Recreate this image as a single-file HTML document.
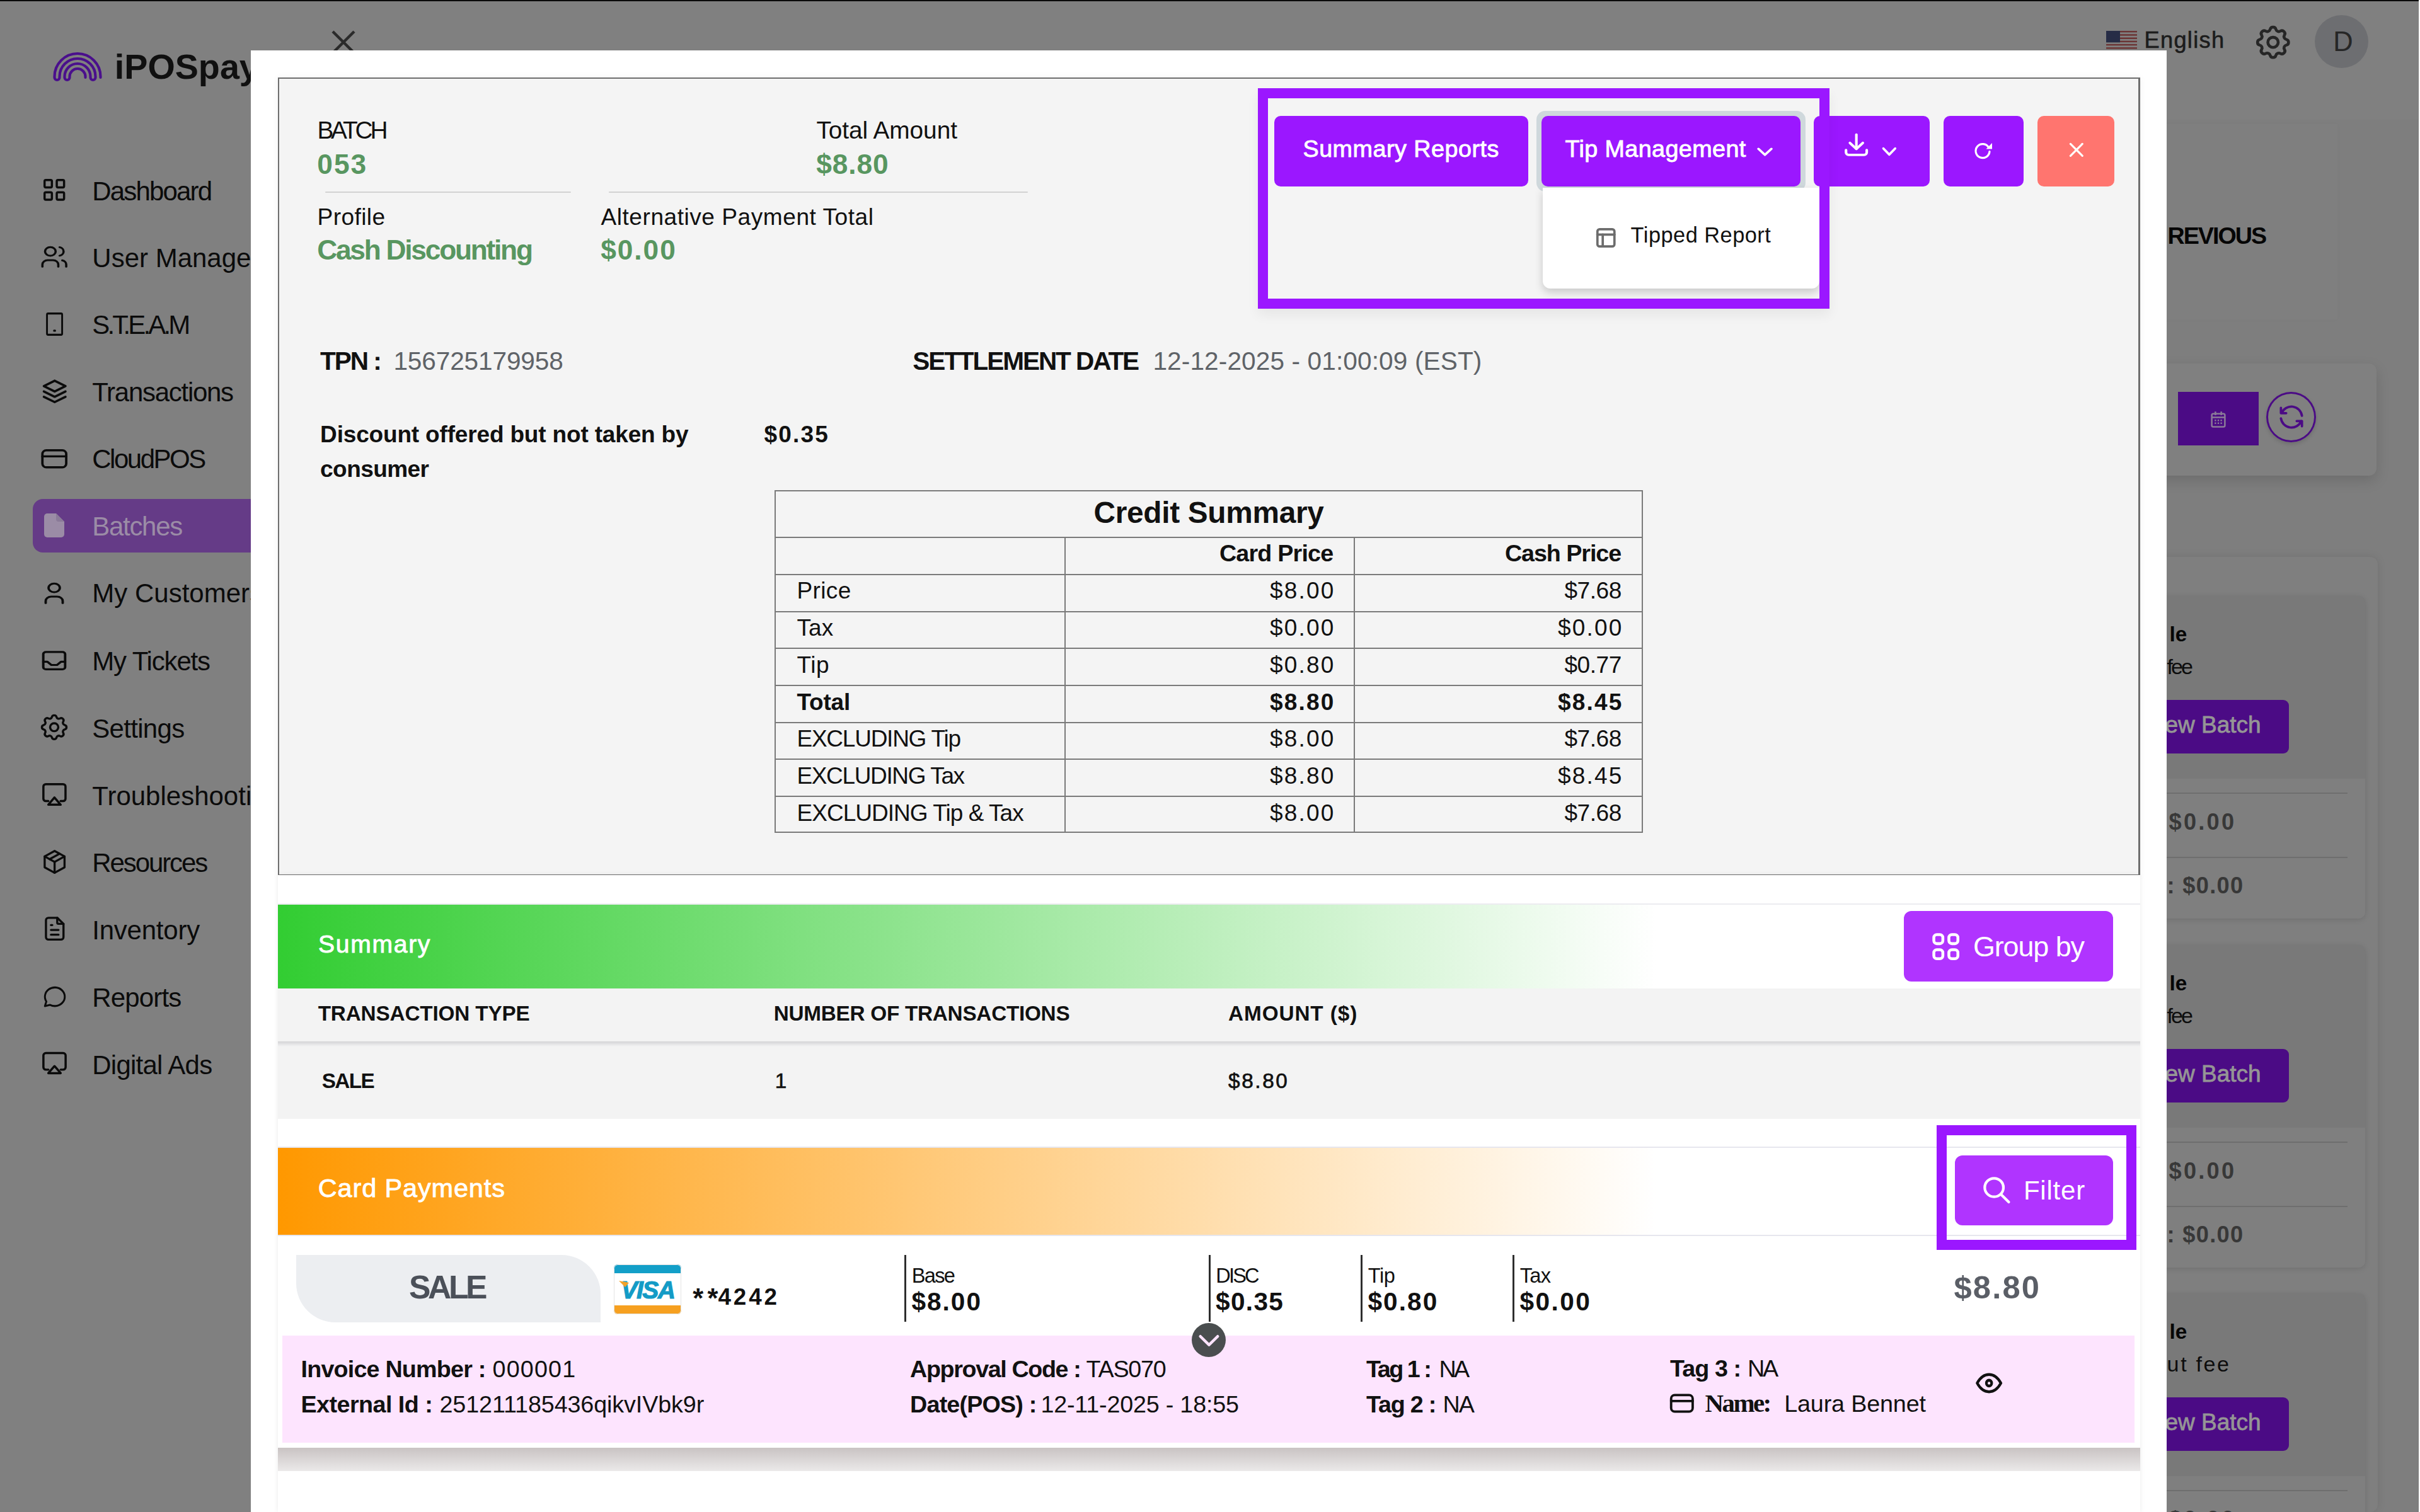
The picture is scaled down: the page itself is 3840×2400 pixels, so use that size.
<!DOCTYPE html><html><head><meta charset="utf-8"><style>html,body{margin:0;padding:0;width:3840px;height:2400px;overflow:hidden;}body{position:relative;font-family:"Liberation Sans",sans-serif;}</style></head><body><div style="position:absolute;left:0px;top:0px;width:3840px;height:2400px;background:#808080"></div><div style="position:absolute;left:398px;top:190px;width:3440px;height:2210px;background:#7e7e7e"></div><div style="position:absolute;left:0px;top:0px;width:3840px;height:2px;background:#0a0a0a"></div><div style="position:absolute;left:3838px;top:0px;width:2px;height:2400px;background:#ffffff"></div><svg style="position:absolute;left:0px;top:0px" width="200" height="140" viewBox="0 0 200 140" fill="none" stroke="#4a0f8c" stroke-width="4.2" stroke-linecap="round"><path d="M159.5 123 L159.5 121.5 A36.5 36.5 0 0 0 86.5 121.5 L86.5 123 A4 4 0 0 0 94.5 123 L94.5 121.5 A28.5 28.5 0 0 1 151.5 121.5 L151.5 123 A4 4 0 0 1 143.5 123 L143.5 121.5 A20.5 20.5 0 0 0 102.5 121.5 L102.5 123 A4 4 0 0 0 110.5 123 L110.5 121.5 A12.5 12.5 0 0 1 135.5 121.5 L135.5 123"/></svg><div style="position:absolute;top:78.9px;font-size:55.7px;line-height:55.7px;font-family:'Liberation Sans';font-weight:700;color:#101010;white-space:pre;left:181.8px;">iPOSpays</div><div style="position:absolute;left:52px;top:792px;width:368px;height:85px;background:#653b87;border-radius:16px"></div><svg style="position:absolute;left:63.0px;top:278.2px;" width="46.4" height="46.7" viewBox="0 0 24 24" preserveAspectRatio="none" fill="none" stroke="#0b0b0b" stroke-width="1.8" stroke-linecap="round" stroke-linejoin="round"><rect x="4" y="4" width="6" height="6" rx="1"/><rect x="14" y="4" width="6" height="6" rx="1"/><rect x="4" y="14" width="6" height="6" rx="1"/><rect x="14" y="14" width="6" height="6" rx="1"/></svg><svg style="position:absolute;left:60.8px;top:387.2px;" width="50.4" height="41.6" viewBox="0 0 24 24" preserveAspectRatio="none" fill="none" stroke="#0b0b0b" stroke-width="1.7" stroke-linecap="round" stroke-linejoin="round"><path d="M5 7a4 4 0 1 0 8 0a4 4 0 1 0 -8 0"/><path d="M3 21v-2a4 4 0 0 1 4 -4h4a4 4 0 0 1 4 4v2"/><path d="M16 3.13a4 4 0 0 1 0 7.75"/><path d="M21 21v-2a4 4 0 0 0 -3 -3.85"/></svg><svg style="position:absolute;left:65.6px;top:492.2px;" width="41.2" height="45.1" viewBox="0 0 24 24" preserveAspectRatio="none" fill="none" stroke="#0b0b0b" stroke-width="1.7" stroke-linecap="round" stroke-linejoin="round"><path d="M5 4a1 1 0 0 1 1 -1h12a1 1 0 0 1 1 1v16a1 1 0 0 1 -1 1h-12a1 1 0 0 1 -1 -1v-16z"/><path d="M11.5 17.5h1"/></svg><svg style="position:absolute;left:60.6px;top:595.7px;" width="51.5" height="50.7" viewBox="0 0 24 24" preserveAspectRatio="none" fill="none" stroke="#0b0b0b" stroke-width="1.7" stroke-linecap="round" stroke-linejoin="round"><path d="M12 4l-8 4l8 4l8 -4l-8 -4"/><path d="M4 12l8 4l8 -4"/><path d="M4 16l8 4l8 -4"/></svg><svg style="position:absolute;left:60.8px;top:704.8px;" width="50.4" height="46.5" viewBox="0 0 24 24" preserveAspectRatio="none" fill="none" stroke="#0b0b0b" stroke-width="1.8" stroke-linecap="round" stroke-linejoin="round"><path d="M3 8a3 3 0 0 1 3 -3h12a3 3 0 0 1 3 3v8a3 3 0 0 1 -3 3h-12a3 3 0 0 1 -3 -3z"/><path d="M3 10l18 0"/></svg><svg style="position:absolute;left:70px;top:815px" width="32" height="38" viewBox="0 0 32 38"><path d="M5 0h14l13 13v20a5 5 0 0 1 -5 5h-22a5 5 0 0 1 -5 -5v-28a5 5 0 0 1 5 -5z" fill="#9b8ca6"/><path d="M19 0v9a4 4 0 0 0 4 4h9" fill="#8a7a98"/></svg><svg style="position:absolute;left:59.2px;top:920.5px;" width="54.0" height="41.6" viewBox="0 0 24 24" preserveAspectRatio="none" fill="none" stroke="#0b0b0b" stroke-width="1.7" stroke-linecap="round" stroke-linejoin="round"><path d="M8 7a4 4 0 1 0 8 0a4 4 0 0 0 -8 0"/><path d="M6 21v-2a4 4 0 0 1 4 -4h4a4 4 0 0 1 4 4v2"/></svg><svg style="position:absolute;left:60.0px;top:1027.8px;" width="52.0" height="41.3" viewBox="0 0 24 24" preserveAspectRatio="none" fill="none" stroke="#0b0b0b" stroke-width="1.8" stroke-linecap="round" stroke-linejoin="round"><path d="M4 6a2 2 0 0 1 2 -2h12a2 2 0 0 1 2 2v12a2 2 0 0 1 -2 2h-12a2 2 0 0 1 -2 -2z"/><path d="M4 13h3l3 3h4l3 -3h3"/></svg><svg style="position:absolute;left:60.0px;top:1129.1px;" width="52.0" height="50.7" viewBox="0 0 24 24" preserveAspectRatio="none" fill="none" stroke="#0b0b0b" stroke-width="1.6" stroke-linecap="round" stroke-linejoin="round"><path d="M10.325 4.317c.426 -1.756 2.924 -1.756 3.35 0a1.724 1.724 0 0 0 2.573 1.066c1.543 -.94 3.31 .826 2.37 2.37a1.724 1.724 0 0 0 1.065 2.572c1.756 .426 1.756 2.924 0 3.35a1.724 1.724 0 0 0 -1.066 2.573c.94 1.543 -.826 3.31 -2.37 2.37a1.724 1.724 0 0 0 -2.572 1.065c-.426 1.756 -2.924 1.756 -3.35 0a1.724 1.724 0 0 0 -2.573 -1.066c-1.543 .94 -3.31 -.826 -2.37 -2.37a1.724 1.724 0 0 0 -1.065 -2.572c-1.756 -.426 -1.756 -2.924 0 -3.35a1.724 1.724 0 0 0 1.066 -2.573c-.94 -1.543 .826 -3.31 2.37 -2.37c1 .608 2.296 .07 2.572 -1.065z"/><path d="M9 12a3 3 0 1 0 6 0a3 3 0 0 0 -6 0"/></svg><svg style="position:absolute;left:62.6px;top:1237.2px;" width="46.8" height="46.1" viewBox="0 0 24 24" preserveAspectRatio="none" fill="none" stroke="#0b0b0b" stroke-width="1.8" stroke-linecap="round" stroke-linejoin="round"><path d="M7 18h-2a2 2 0 0 1 -2 -2v-10a2 2 0 0 1 2 -2h14a2 2 0 0 1 2 2v10a2 2 0 0 1 -2 2h-2"/><path d="M12 15l5 6h-10z"/></svg><svg style="position:absolute;left:62.6px;top:1344.7px;" width="47.3" height="46.2" viewBox="0 0 24 24" preserveAspectRatio="none" fill="none" stroke="#0b0b0b" stroke-width="1.7" stroke-linecap="round" stroke-linejoin="round"><path d="M12 3l8 4.5l0 9l-8 4.5l-8 -4.5l0 -9l8 -4.5"/><path d="M12 12l8 -4.5"/><path d="M12 12l0 9"/><path d="M12 12l-8 -4.5"/><path d="M16 5.25l-8 4.5"/></svg><svg style="position:absolute;left:62.6px;top:1451.2px;" width="47.7" height="46.2" viewBox="0 0 24 24" preserveAspectRatio="none" fill="none" stroke="#0b0b0b" stroke-width="1.7" stroke-linecap="round" stroke-linejoin="round"><path d="M14 3v4a1 1 0 0 0 1 1h4"/><path d="M17 21h-10a2 2 0 0 1 -2 -2v-14a2 2 0 0 1 2 -2h7l5 5v11a2 2 0 0 1 -2 2z"/><path d="M9 9l1 0"/><path d="M9 13l6 0"/><path d="M9 17l6 0"/></svg><svg style="position:absolute;left:65.5px;top:1559.8px;" width="42.0" height="44.3" viewBox="0 0 24 24" preserveAspectRatio="none" fill="none" stroke="#0b0b0b" stroke-width="1.7" stroke-linecap="round" stroke-linejoin="round"><path d="M3 20l1.3 -3.9c-2.324 -3.437 -1.426 -7.872 2.1 -10.374c3.526 -2.501 8.59 -2.296 11.845 .48c3.255 2.777 3.695 7.266 1.029 10.501c-2.666 3.235 -7.615 4.215 -11.574 2.293l-4.7 1"/></svg><svg style="position:absolute;left:62.5px;top:1664.4px;" width="47.0" height="45.1" viewBox="0 0 24 24" preserveAspectRatio="none" fill="none" stroke="#0b0b0b" stroke-width="1.8" stroke-linecap="round" stroke-linejoin="round"><path d="M7 18h-2a2 2 0 0 1 -2 -2v-10a2 2 0 0 1 2 -2h14a2 2 0 0 1 2 2v10a2 2 0 0 1 -2 2h-2"/><path d="M12 15l5 6h-10z"/></svg><div style="position:absolute;top:283.4px;font-size:42.0px;line-height:42.0px;font-family:'Liberation Sans';font-weight:400;color:#0b0b0b;white-space:pre;letter-spacing:-1.83px;left:146.3px;">Dashboard</div><div style="position:absolute;top:389.4px;font-size:42.0px;line-height:42.0px;font-family:'Liberation Sans';font-weight:400;color:#0b0b0b;white-space:pre;left:146.3px;">User Management</div><div style="position:absolute;top:495.4px;font-size:42.0px;line-height:42.0px;font-family:'Liberation Sans';font-weight:400;color:#0b0b0b;white-space:pre;letter-spacing:-3.85px;left:146.3px;">S.T.E.A.M</div><div style="position:absolute;top:602.4px;font-size:42.0px;line-height:42.0px;font-family:'Liberation Sans';font-weight:400;color:#0b0b0b;white-space:pre;letter-spacing:-1.28px;left:146.3px;">Transactions</div><div style="position:absolute;top:708.4px;font-size:42.0px;line-height:42.0px;font-family:'Liberation Sans';font-weight:400;color:#0b0b0b;white-space:pre;letter-spacing:-2.51px;left:146.3px;">CloudPOS</div><div style="position:absolute;top:815.4px;font-size:42.0px;line-height:42.0px;font-family:'Liberation Sans';font-weight:400;color:#9b8ca6;white-space:pre;letter-spacing:-1.31px;left:146.3px;">Batches</div><div style="position:absolute;top:921.4px;font-size:42.0px;line-height:42.0px;font-family:'Liberation Sans';font-weight:400;color:#0b0b0b;white-space:pre;left:146.3px;">My Customers</div><div style="position:absolute;top:1029.4px;font-size:42.0px;line-height:42.0px;font-family:'Liberation Sans';font-weight:400;color:#0b0b0b;white-space:pre;letter-spacing:-1.17px;left:146.3px;">My Tickets</div><div style="position:absolute;top:1136.4px;font-size:42.0px;line-height:42.0px;font-family:'Liberation Sans';font-weight:400;color:#0b0b0b;white-space:pre;letter-spacing:-0.70px;left:146.3px;">Settings</div><div style="position:absolute;top:1243.4px;font-size:42.0px;line-height:42.0px;font-family:'Liberation Sans';font-weight:400;color:#0b0b0b;white-space:pre;left:146.3px;">Troubleshooting</div><div style="position:absolute;top:1349.4px;font-size:42.0px;line-height:42.0px;font-family:'Liberation Sans';font-weight:400;color:#0b0b0b;white-space:pre;letter-spacing:-2.11px;left:146.3px;">Resources</div><div style="position:absolute;top:1456.4px;font-size:42.0px;line-height:42.0px;font-family:'Liberation Sans';font-weight:400;color:#0b0b0b;white-space:pre;letter-spacing:-0.24px;left:146.3px;">Inventory</div><div style="position:absolute;top:1563.4px;font-size:42.0px;line-height:42.0px;font-family:'Liberation Sans';font-weight:400;color:#0b0b0b;white-space:pre;letter-spacing:-0.86px;left:146.3px;">Reports</div><div style="position:absolute;top:1670.4px;font-size:42.0px;line-height:42.0px;font-family:'Liberation Sans';font-weight:400;color:#0b0b0b;white-space:pre;letter-spacing:-0.76px;left:146.3px;">Digital Ads</div><svg style="position:absolute;left:3342px;top:49px" width="49" height="34" viewBox="0 0 49 34"><rect x="0" y="0.00" width="49" height="2.62" fill="#6b3434"/><rect x="0" y="2.62" width="49" height="2.62" fill="#808080"/><rect x="0" y="5.23" width="49" height="2.62" fill="#6b3434"/><rect x="0" y="7.85" width="49" height="2.62" fill="#808080"/><rect x="0" y="10.46" width="49" height="2.62" fill="#6b3434"/><rect x="0" y="13.08" width="49" height="2.62" fill="#808080"/><rect x="0" y="15.69" width="49" height="2.62" fill="#6b3434"/><rect x="0" y="18.31" width="49" height="2.62" fill="#808080"/><rect x="0" y="20.92" width="49" height="2.62" fill="#6b3434"/><rect x="0" y="23.54" width="49" height="2.62" fill="#808080"/><rect x="0" y="26.15" width="49" height="2.62" fill="#6b3434"/><rect x="0" y="28.77" width="49" height="2.62" fill="#808080"/><rect x="0" y="31.38" width="49" height="2.62" fill="#6b3434"/><rect x="0" y="0" width="22" height="18.3" fill="#262c46"/></svg><div style="position:absolute;top:46.3px;font-size:36.2px;line-height:36.2px;font-family:'Liberation Sans';font-weight:400;color:#1c1c1c;white-space:pre;letter-spacing:1.29px;left:3402.6px;-webkit-text-stroke:0.6px #1c1c1c;">English</div><svg style="position:absolute;left:3573.7px;top:34.8px;" width="65.6" height="64.3" viewBox="0 0 24 24" preserveAspectRatio="none" fill="none" stroke="#262626" stroke-width="1.7" stroke-linecap="round" stroke-linejoin="round"><path d="M10.325 4.317c.426 -1.756 2.924 -1.756 3.35 0a1.724 1.724 0 0 0 2.573 1.066c1.543 -.94 3.31 .826 2.37 2.37a1.724 1.724 0 0 0 1.065 2.572c1.756 .426 1.756 2.924 0 3.35a1.724 1.724 0 0 0 -1.066 2.573c.94 1.543 -.826 3.31 -2.37 2.37a1.724 1.724 0 0 0 -2.572 1.065c-.426 1.756 -2.924 1.756 -3.35 0a1.724 1.724 0 0 0 -2.573 -1.066c-1.543 .94 -3.31 -.826 -2.37 -2.37a1.724 1.724 0 0 0 -1.065 -2.572c-1.756 -.426 -1.756 -2.924 0 -3.35a1.724 1.724 0 0 0 1.066 -2.573c-.94 -1.543 .826 -3.31 2.37 -2.37c1 .608 2.296 .07 2.572 -1.065z"/><path d="M9 12a3 3 0 1 0 6 0a3 3 0 0 0 -6 0"/></svg><div style="position:absolute;left:3673px;top:24px;width:85px;height:84px;background:#6d6e71;border-radius:50%"></div><div style="position:absolute;top:45.2px;font-size:43.5px;line-height:43.5px;font-family:'Liberation Sans';font-weight:400;color:#262626;white-space:pre;left:3702.3px;">D</div><div style="position:absolute;left:3300px;top:197px;width:409px;height:310px;background:#7f7f7f;box-shadow:0 0 10px rgba(0,0,0,0.02)"></div><div style="position:absolute;top:356.1px;font-size:37.7px;line-height:37.7px;font-family:'Liberation Sans';font-weight:700;color:#060606;white-space:pre;letter-spacing:-1.99px;left:3439.5px;">REVIOUS</div><div style="position:absolute;left:3300px;top:577px;width:471px;height:178px;background:#808080;border-radius:12px;box-shadow:0 8px 22px rgba(0,0,0,0.14)"></div><div style="position:absolute;left:3456px;top:622px;width:128px;height:85px;background:#4b0b85"></div><svg style="position:absolute;left:3506px;top:651px" width="28" height="30" viewBox="0 0 24 26" fill="none" stroke="#8a7a98" stroke-width="2.2"><rect x="3" y="5" width="18" height="18" rx="2"/><path d="M3 10h18M8 2v5M16 2v5"/><path d="M7 14h2M11 14h2M15 14h2M7 18h2M11 18h2M15 18h2"/></svg><div style="position:absolute;left:3596px;top:622px;width:79px;height:80px;border:3px solid #4b0b85;border-radius:50%;box-sizing:border-box;box-shadow:0 3px 6px rgba(0,0,0,0.15)"></div><svg style="position:absolute;left:3611px;top:637px" width="50" height="50" viewBox="0 0 24 24" fill="none" stroke="#4b0b85" stroke-width="1.8" stroke-linecap="round" stroke-linejoin="round"><path d="M20 11a8.1 8.1 0 0 0 -15.5 -2m-.5 -4v4h4"/><path d="M4 13a8.1 8.1 0 0 0 15.5 2m.5 4v-4h-4"/></svg><div style="position:absolute;left:3300px;top:884px;width:473px;height:1516px;background:#7f7f7f;border-radius:12px;box-shadow:0 0 14px rgba(0,0,0,0.10)"></div><div style="position:absolute;left:3300px;top:946px;width:453px;height:512px;background:#797979;border-radius:10px;box-shadow:0 2px 10px rgba(0,0,0,0.12);overflow:hidden"></div><div style="position:absolute;left:3300px;top:1236px;width:453px;height:222px;background:#7f7f7f;border-radius:0 0 10px 10px"></div><div style="position:absolute;top:989.8px;font-size:33.3px;line-height:33.3px;font-family:'Liberation Sans';font-weight:700;color:#060606;white-space:pre;left:3442.5px;">le</div><div style="position:absolute;top:1041.2px;font-size:34.1px;line-height:34.1px;font-family:'Liberation Sans';font-weight:400;color:#0d0d0d;white-space:pre;letter-spacing:-2.98px;left:3438.6px;">fee</div><div style="position:absolute;left:3300px;top:1111px;width:332px;height:85px;background:#4b0b85;border-radius:9px"></div><div style="position:absolute;top:1131.7px;font-size:37.0px;line-height:37.0px;font-family:'Liberation Sans';font-weight:400;color:#959595;white-space:pre;left:3435.5px;-webkit-text-stroke:0.8px #959595;">ew Batch</div><div style="position:absolute;left:3300px;top:1258px;width:425px;height:2px;background:#6e6e6e"></div><div style="position:absolute;left:3300px;top:1360px;width:425px;height:2px;background:#6e6e6e"></div><div style="position:absolute;top:1287.3px;font-size:36.2px;line-height:36.2px;font-family:'Liberation Sans';font-weight:700;color:#383838;white-space:pre;letter-spacing:3.22px;left:3441.6px;">$0.00</div><div style="position:absolute;top:1388.3px;font-size:36.2px;line-height:36.2px;font-family:'Liberation Sans';font-weight:700;color:#383838;white-space:pre;letter-spacing:1.30px;left:3438.6px;">: $0.00</div><div style="position:absolute;left:3300px;top:1500px;width:453px;height:512px;background:#797979;border-radius:10px;box-shadow:0 2px 10px rgba(0,0,0,0.12);overflow:hidden"></div><div style="position:absolute;left:3300px;top:1790px;width:453px;height:222px;background:#7f7f7f;border-radius:0 0 10px 10px"></div><div style="position:absolute;top:1543.8px;font-size:33.3px;line-height:33.3px;font-family:'Liberation Sans';font-weight:700;color:#060606;white-space:pre;left:3442.5px;">le</div><div style="position:absolute;top:1595.2px;font-size:34.1px;line-height:34.1px;font-family:'Liberation Sans';font-weight:400;color:#0d0d0d;white-space:pre;letter-spacing:-2.98px;left:3438.6px;">fee</div><div style="position:absolute;left:3300px;top:1665px;width:332px;height:85px;background:#4b0b85;border-radius:9px"></div><div style="position:absolute;top:1685.7px;font-size:37.0px;line-height:37.0px;font-family:'Liberation Sans';font-weight:400;color:#959595;white-space:pre;left:3435.5px;-webkit-text-stroke:0.8px #959595;">ew Batch</div><div style="position:absolute;left:3300px;top:1812px;width:425px;height:2px;background:#6e6e6e"></div><div style="position:absolute;left:3300px;top:1914px;width:425px;height:2px;background:#6e6e6e"></div><div style="position:absolute;top:1841.3px;font-size:36.2px;line-height:36.2px;font-family:'Liberation Sans';font-weight:700;color:#383838;white-space:pre;letter-spacing:3.22px;left:3441.6px;">$0.00</div><div style="position:absolute;top:1942.3px;font-size:36.2px;line-height:36.2px;font-family:'Liberation Sans';font-weight:700;color:#383838;white-space:pre;letter-spacing:1.30px;left:3438.6px;">: $0.00</div><div style="position:absolute;left:3300px;top:2053px;width:453px;height:512px;background:#797979;border-radius:10px;box-shadow:0 2px 10px rgba(0,0,0,0.12);overflow:hidden"></div><div style="position:absolute;left:3300px;top:2343px;width:453px;height:222px;background:#7f7f7f;border-radius:0 0 10px 10px"></div><div style="position:absolute;top:2096.8px;font-size:33.3px;line-height:33.3px;font-family:'Liberation Sans';font-weight:700;color:#060606;white-space:pre;left:3442.5px;">le</div><div style="position:absolute;top:2148.2px;font-size:34.1px;line-height:34.1px;font-family:'Liberation Sans';font-weight:400;color:#0d0d0d;white-space:pre;letter-spacing:2.64px;left:3438.6px;">ut fee</div><div style="position:absolute;left:3300px;top:2218px;width:332px;height:85px;background:#4b0b85;border-radius:9px"></div><div style="position:absolute;top:2238.7px;font-size:37.0px;line-height:37.0px;font-family:'Liberation Sans';font-weight:400;color:#959595;white-space:pre;left:3435.5px;-webkit-text-stroke:0.8px #959595;">ew Batch</div><div style="position:absolute;left:3300px;top:2365px;width:425px;height:2px;background:#6e6e6e"></div><div style="position:absolute;left:3300px;top:2467px;width:425px;height:2px;background:#6e6e6e"></div><div style="position:absolute;top:2394.3px;font-size:36.2px;line-height:36.2px;font-family:'Liberation Sans';font-weight:700;color:#383838;white-space:pre;letter-spacing:3.22px;left:3441.6px;">$0.00</div><div style="position:absolute;top:2495.3px;font-size:36.2px;line-height:36.2px;font-family:'Liberation Sans';font-weight:700;color:#383838;white-space:pre;letter-spacing:1.30px;left:3438.6px;">: $0.00</div><svg style="position:absolute;left:524px;top:46px" width="42" height="42" viewBox="0 0 42 42" stroke="#2a2a2a" stroke-width="4.5" stroke-linecap="butt"><path d="M4 4L38 38M38 4L4 38"/></svg><div style="position:absolute;left:398px;top:80px;width:3040px;height:2320px;background:#ffffff"></div><div style="position:absolute;left:441px;top:123px;width:2955px;height:1268px;background:#f4f4f4;border:2px solid #6e6e6e;border-bottom-width:3px;border-right-width:3px;box-sizing:border-box;box-shadow:0 0 10px rgba(0,0,0,0.06)"></div><div style="position:absolute;top:188.4px;font-size:38.8px;line-height:38.8px;font-family:'Liberation Sans';font-weight:400;color:#111;white-space:pre;letter-spacing:-4.15px;left:503.4px;">BATCH</div><div style="position:absolute;top:238.5px;font-size:44.3px;line-height:44.3px;font-family:'Liberation Sans';font-weight:700;color:#589660;white-space:pre;letter-spacing:2.07px;left:503.2px;">053</div><div style="position:absolute;top:188.4px;font-size:38.8px;line-height:38.8px;font-family:'Liberation Sans';font-weight:400;color:#111;white-space:pre;letter-spacing:-0.07px;left:1295.4px;">Total Amount</div><div style="position:absolute;top:238.5px;font-size:44.3px;line-height:44.3px;font-family:'Liberation Sans';font-weight:700;color:#589660;white-space:pre;letter-spacing:0.92px;left:1295.2px;">$8.80</div><div style="position:absolute;left:516px;top:304px;width:390px;height:2px;background:#d2d2d2;border-radius:1px"></div><div style="position:absolute;left:966px;top:304px;width:665px;height:2px;background:#d2d2d2;border-radius:1px"></div><div style="position:absolute;top:325.6px;font-size:37.1px;line-height:37.1px;font-family:'Liberation Sans';font-weight:400;color:#111;white-space:pre;letter-spacing:0.41px;left:503.5px;">Profile</div><div style="position:absolute;top:374.8px;font-size:44.3px;line-height:44.3px;font-family:'Liberation Sans';font-weight:700;color:#589660;white-space:pre;letter-spacing:-2.25px;left:503.2px;">Cash Discounting</div><div style="position:absolute;top:325.6px;font-size:37.1px;line-height:37.1px;font-family:'Liberation Sans';font-weight:400;color:#111;white-space:pre;letter-spacing:0.53px;left:953.5px;">Alternative Payment Total</div><div style="position:absolute;top:374.8px;font-size:44.3px;line-height:44.3px;font-family:'Liberation Sans';font-weight:700;color:#589660;white-space:pre;letter-spacing:1.94px;left:953.2px;">$0.00</div><div style="position:absolute;top:552.6px;font-size:40.6px;line-height:40.6px;font-family:'Liberation Sans';font-weight:700;color:#111;white-space:pre;letter-spacing:-2.02px;left:508.0px;">TPN :</div><div style="position:absolute;top:552.6px;font-size:40.6px;line-height:40.6px;font-family:'Liberation Sans';font-weight:400;color:#5f6368;white-space:pre;letter-spacing:-0.13px;left:624.4px;">156725179958</div><div style="position:absolute;top:552.6px;font-size:40.6px;line-height:40.6px;font-family:'Liberation Sans';font-weight:700;color:#111;white-space:pre;letter-spacing:-2.09px;left:1448.2px;">SETTLEMENT DATE</div><div style="position:absolute;top:552.6px;font-size:40.6px;line-height:40.6px;font-family:'Liberation Sans';font-weight:400;color:#5f6368;white-space:pre;letter-spacing:0.12px;left:1829.4px;">12-12-2025 - 01:00:09 (EST)</div><div style="position:absolute;top:671.2px;font-size:37.0px;line-height:37.0px;font-family:'Liberation Sans';font-weight:700;color:#111;white-space:pre;letter-spacing:-0.17px;left:508.1px;">Discount offered but not taken by</div><div style="position:absolute;top:726.3px;font-size:37.0px;line-height:37.0px;font-family:'Liberation Sans';font-weight:700;color:#111;white-space:pre;letter-spacing:-0.57px;left:508.1px;">consumer</div><div style="position:absolute;top:671.2px;font-size:37.0px;line-height:37.0px;font-family:'Liberation Sans';font-weight:700;color:#111;white-space:pre;letter-spacing:2.19px;left:1212.5px;">$0.35</div><div style="position:absolute;left:1229px;top:778px;width:1378px;height:544px;border:2px solid #7a7a7a;box-sizing:border-box"></div><div style="position:absolute;left:1229px;top:852px;width:1378px;height:2px;background:#7a7a7a"></div><div style="position:absolute;left:1229px;top:911px;width:1378px;height:2px;background:#7a7a7a"></div><div style="position:absolute;left:1229px;top:970px;width:1378px;height:2px;background:#7a7a7a"></div><div style="position:absolute;left:1229px;top:1028px;width:1378px;height:2px;background:#7a7a7a"></div><div style="position:absolute;left:1229px;top:1087px;width:1378px;height:2px;background:#7a7a7a"></div><div style="position:absolute;left:1229px;top:1146px;width:1378px;height:2px;background:#7a7a7a"></div><div style="position:absolute;left:1229px;top:1204px;width:1378px;height:2px;background:#7a7a7a"></div><div style="position:absolute;left:1229px;top:1263px;width:1378px;height:2px;background:#7a7a7a"></div><div style="position:absolute;left:1689px;top:852px;width:2px;height:470px;background:#7a7a7a"></div><div style="position:absolute;left:2148px;top:852px;width:2px;height:470px;background:#7a7a7a"></div><div style="position:absolute;top:789.5px;font-size:47.8px;line-height:47.8px;font-family:'Liberation Sans';font-weight:700;color:#111;white-space:pre;letter-spacing:-0.31px;left:1735.6px;">Credit Summary</div><div style="position:absolute;top:860.1px;font-size:37.7px;line-height:37.7px;font-family:'Liberation Sans';font-weight:700;color:#111;white-space:pre;letter-spacing:-0.80px;left:1934.9px;">Card Price</div><div style="position:absolute;top:860.1px;font-size:37.7px;line-height:37.7px;font-family:'Liberation Sans';font-weight:700;color:#111;white-space:pre;letter-spacing:-1.06px;left:2387.9px;">Cash Price</div><div style="position:absolute;top:919.2px;font-size:37.0px;line-height:37.0px;font-family:'Liberation Sans';font-weight:400;color:#111;white-space:pre;letter-spacing:0.36px;left:1264.5px;">Price</div><div style="position:absolute;top:919.2px;font-size:37.0px;line-height:37.0px;font-family:'Liberation Sans';font-weight:400;color:#111;white-space:pre;letter-spacing:2.16px;left:2015.0px;">$8.00</div><div style="position:absolute;top:919.2px;font-size:37.0px;line-height:37.0px;font-family:'Liberation Sans';font-weight:400;color:#111;white-space:pre;letter-spacing:-0.46px;left:2482.5px;">$7.68</div><div style="position:absolute;top:978.0px;font-size:37.0px;line-height:37.0px;font-family:'Liberation Sans';font-weight:400;color:#111;white-space:pre;letter-spacing:0.05px;left:1264.5px;">Tax</div><div style="position:absolute;top:978.0px;font-size:37.0px;line-height:37.0px;font-family:'Liberation Sans';font-weight:400;color:#111;white-space:pre;letter-spacing:2.16px;left:2015.0px;">$0.00</div><div style="position:absolute;top:978.0px;font-size:37.0px;line-height:37.0px;font-family:'Liberation Sans';font-weight:400;color:#111;white-space:pre;letter-spacing:2.16px;left:2472.0px;">$0.00</div><div style="position:absolute;top:1036.7px;font-size:37.0px;line-height:37.0px;font-family:'Liberation Sans';font-weight:400;color:#111;white-space:pre;letter-spacing:0.57px;left:1264.5px;">Tip</div><div style="position:absolute;top:1036.7px;font-size:37.0px;line-height:37.0px;font-family:'Liberation Sans';font-weight:400;color:#111;white-space:pre;letter-spacing:2.16px;left:2015.0px;">$0.80</div><div style="position:absolute;top:1036.7px;font-size:37.0px;line-height:37.0px;font-family:'Liberation Sans';font-weight:400;color:#111;white-space:pre;letter-spacing:-0.46px;left:2482.5px;">$0.77</div><div style="position:absolute;top:1095.5px;font-size:37.0px;line-height:37.0px;font-family:'Liberation Sans';font-weight:700;color:#111;white-space:pre;letter-spacing:-0.23px;left:1264.5px;">Total</div><div style="position:absolute;top:1095.5px;font-size:37.0px;line-height:37.0px;font-family:'Liberation Sans';font-weight:700;color:#111;white-space:pre;letter-spacing:2.16px;left:2015.0px;">$8.80</div><div style="position:absolute;top:1095.5px;font-size:37.0px;line-height:37.0px;font-family:'Liberation Sans';font-weight:700;color:#111;white-space:pre;letter-spacing:2.16px;left:2472.0px;">$8.45</div><div style="position:absolute;top:1154.2px;font-size:37.0px;line-height:37.0px;font-family:'Liberation Sans';font-weight:400;color:#111;white-space:pre;letter-spacing:-1.25px;left:1264.5px;">EXCLUDING Tip</div><div style="position:absolute;top:1154.2px;font-size:37.0px;line-height:37.0px;font-family:'Liberation Sans';font-weight:400;color:#111;white-space:pre;letter-spacing:2.16px;left:2015.0px;">$8.00</div><div style="position:absolute;top:1154.2px;font-size:37.0px;line-height:37.0px;font-family:'Liberation Sans';font-weight:400;color:#111;white-space:pre;letter-spacing:-0.46px;left:2482.5px;">$7.68</div><div style="position:absolute;top:1213.0px;font-size:37.0px;line-height:37.0px;font-family:'Liberation Sans';font-weight:400;color:#111;white-space:pre;letter-spacing:-1.37px;left:1264.5px;">EXCLUDING Tax</div><div style="position:absolute;top:1213.0px;font-size:37.0px;line-height:37.0px;font-family:'Liberation Sans';font-weight:400;color:#111;white-space:pre;letter-spacing:2.16px;left:2015.0px;">$8.80</div><div style="position:absolute;top:1213.0px;font-size:37.0px;line-height:37.0px;font-family:'Liberation Sans';font-weight:400;color:#111;white-space:pre;letter-spacing:2.16px;left:2472.0px;">$8.45</div><div style="position:absolute;top:1271.7px;font-size:37.0px;line-height:37.0px;font-family:'Liberation Sans';font-weight:400;color:#111;white-space:pre;letter-spacing:-0.97px;left:1264.5px;">EXCLUDING Tip &amp; Tax</div><div style="position:absolute;top:1271.7px;font-size:37.0px;line-height:37.0px;font-family:'Liberation Sans';font-weight:400;color:#111;white-space:pre;letter-spacing:2.16px;left:2015.0px;">$8.00</div><div style="position:absolute;top:1271.7px;font-size:37.0px;line-height:37.0px;font-family:'Liberation Sans';font-weight:400;color:#111;white-space:pre;letter-spacing:-0.46px;left:2482.5px;">$7.68</div><div style="position:absolute;left:2438px;top:176px;width:427px;height:128px;background:#cfd8dc;border-radius:14px"></div><div style="position:absolute;left:2022px;top:184px;width:403px;height:112px;background:#9b17ff;border-radius:10px"></div><div style="position:absolute;left:2446px;top:184px;width:411px;height:112px;background:#9b17ff;border-radius:10px"></div><div style="position:absolute;left:2878px;top:184px;width:184px;height:112px;background:#9b17ff;border-radius:10px"></div><div style="position:absolute;left:3084px;top:184px;width:127px;height:112px;background:#9b17ff;border-radius:10px"></div><div style="position:absolute;left:3233px;top:184px;width:122px;height:112px;background:#ff756f;border-radius:10px"></div><div style="position:absolute;top:218.1px;font-size:37.7px;line-height:37.7px;font-family:'Liberation Sans';font-weight:400;color:#fff;white-space:pre;letter-spacing:0.51px;left:2067.5px;-webkit-text-stroke:0.9px #fff;">Summary Reports</div><div style="position:absolute;top:218.1px;font-size:37.7px;line-height:37.7px;font-family:'Liberation Sans';font-weight:400;color:#fff;white-space:pre;letter-spacing:0.41px;left:2483.5px;-webkit-text-stroke:0.9px #fff;">Tip Management</div><svg style="position:absolute;left:2780.4px;top:222.3px;" width="41.1" height="38.1" viewBox="0 0 24 24" preserveAspectRatio="none" fill="none" stroke="#fff" stroke-width="2.2" stroke-linecap="round" stroke-linejoin="round"><path d="M6 9l6 6l6 -6"/></svg><svg style="position:absolute;left:2920.8px;top:206.3px;" width="49.3" height="45.5" viewBox="0 0 24 24" preserveAspectRatio="none" fill="none" stroke="#fff" stroke-width="2.0" stroke-linecap="round" stroke-linejoin="round"><path d="M4 17v2a2 2 0 0 0 2 2h12a2 2 0 0 0 2 -2v-2"/><path d="M7 11l5 5l5 -5"/><path d="M12 4l0 12"/></svg><svg style="position:absolute;left:2979.1px;top:221.0px;" width="37.7" height="39.0" viewBox="0 0 24 24" preserveAspectRatio="none" fill="none" stroke="#fff" stroke-width="2.2" stroke-linecap="round" stroke-linejoin="round"><path d="M6 9l6 6l6 -6"/></svg><svg style="position:absolute;left:3131px;top:223px" width="32" height="32" viewBox="0 0 32 32" fill="none"><path d="M24.5 11 A11 11 0 1 0 26 17.5" stroke="#fff" stroke-width="3.2" stroke-linecap="round"/><path d="M30 4 L30 13.5 L20.5 13.5 Z" fill="#fff"/></svg><svg style="position:absolute;left:3275.6px;top:219.1px;" width="37.7" height="37.7" viewBox="0 0 24 24" preserveAspectRatio="none" fill="none" stroke="#fff" stroke-width="2.0" stroke-linecap="round" stroke-linejoin="round"><path d="M18 6l-12 12"/><path d="M6 6l12 12"/></svg><div style="position:absolute;left:2448px;top:298px;width:439px;height:160px;background:#fff;border-radius:0 0 12px 12px;box-shadow:0 6px 14px rgba(0,0,0,0.18)"></div><svg style="position:absolute;left:2527.5px;top:356.9px;" width="40.5" height="40.9" viewBox="0 0 24 24" preserveAspectRatio="none" fill="none" stroke="#6c6c6c" stroke-width="2.2" stroke-linecap="round" stroke-linejoin="round"><rect x="4" y="4" width="16" height="16" rx="2"/><path d="M4 9h16"/><path d="M9 9v11"/></svg><div style="position:absolute;top:355.9px;font-size:34.3px;line-height:34.3px;font-family:'Liberation Sans';font-weight:400;color:#111;white-space:pre;letter-spacing:0.51px;left:2587.6px;">Tipped Report</div><div style="position:absolute;left:1996px;top:140px;width:907px;height:350px;border:16px solid #9b17ff;box-sizing:border-box;box-shadow:0 10px 18px rgba(0,0,0,0.06)"></div><div style="position:absolute;left:441px;top:1389px;width:2955px;height:1011px;background:#fff;box-shadow:0 0 8px rgba(0,0,0,0.08)"></div><div style="position:absolute;left:441px;top:1434px;width:2955px;height:2px;background:#ececf0"></div><div style="position:absolute;left:441px;top:1436px;width:2955px;height:133px;background:linear-gradient(90deg,#32cd32 0%,#ffffff 74%)"></div><div style="position:absolute;top:1478.9px;font-size:39.1px;line-height:39.1px;font-family:'Liberation Sans';font-weight:400;color:#fff;white-space:pre;letter-spacing:1.72px;left:504.9px;-webkit-text-stroke:0.9px #fff;">Summary</div><div style="position:absolute;left:3021px;top:1446px;width:332px;height:112px;background:#b034ff;border-radius:12px"></div><svg style="position:absolute;left:3058.8px;top:1473.8px;" width="57.3" height="57.3" viewBox="0 0 24 24" preserveAspectRatio="none" fill="none" stroke="#fff" stroke-width="1.9" stroke-linecap="round" stroke-linejoin="round"><rect x="4" y="4" width="6" height="6" rx="2"/><rect x="14" y="4" width="6" height="6" rx="2"/><rect x="4" y="14" width="6" height="6" rx="2"/><rect x="14" y="14" width="6" height="6" rx="2"/></svg><div style="position:absolute;top:1481.3px;font-size:44.9px;line-height:44.9px;font-family:'Liberation Sans';font-weight:400;color:#fff;white-space:pre;letter-spacing:-1.08px;left:3130.9px;">Group by</div><div style="position:absolute;left:441px;top:1569px;width:2955px;height:84px;background:#f3f3f3"></div><div style="position:absolute;left:441px;top:1653px;width:2955px;height:8px;background:linear-gradient(180deg,#d3d3d6,#f3f3f3)"></div><div style="position:absolute;left:441px;top:1661px;width:2955px;height:115px;background:#f3f3f3"></div><div style="position:absolute;top:1591.8px;font-size:33.3px;line-height:33.3px;font-family:'Liberation Sans';font-weight:700;color:#111;white-space:pre;letter-spacing:-0.17px;left:504.7px;">TRANSACTION TYPE</div><div style="position:absolute;top:1591.8px;font-size:33.3px;line-height:33.3px;font-family:'Liberation Sans';font-weight:700;color:#111;white-space:pre;letter-spacing:-0.26px;left:1227.7px;">NUMBER OF TRANSACTIONS</div><div style="position:absolute;top:1591.8px;font-size:33.3px;line-height:33.3px;font-family:'Liberation Sans';font-weight:700;color:#111;white-space:pre;letter-spacing:0.90px;left:1949.1px;">AMOUNT ($)</div><div style="position:absolute;top:1698.8px;font-size:33.3px;line-height:33.3px;font-family:'Liberation Sans';font-weight:700;color:#111;white-space:pre;letter-spacing:-1.62px;left:510.7px;">SALE</div><div style="position:absolute;top:1698.8px;font-size:33.3px;line-height:33.3px;font-family:'Liberation Sans';font-weight:400;color:#111;white-space:pre;left:1229.7px;-webkit-text-stroke:0.7px #111;">1</div><div style="position:absolute;top:1698.8px;font-size:33.3px;line-height:33.3px;font-family:'Liberation Sans';font-weight:400;color:#111;white-space:pre;letter-spacing:2.61px;left:1949.1px;-webkit-text-stroke:0.7px #111;">$8.80</div><div style="position:absolute;left:441px;top:1820px;width:2955px;height:2px;background:#e6e6ee"></div><div style="position:absolute;left:441px;top:1822px;width:2955px;height:138px;background:linear-gradient(90deg,#ff9800 0%,#ffffff 74%)"></div><div style="position:absolute;left:441px;top:1960px;width:2955px;height:2px;background:#e6e6ee"></div><div style="position:absolute;top:1865.9px;font-size:41.4px;line-height:41.4px;font-family:'Liberation Sans';font-weight:400;color:#fff;white-space:pre;letter-spacing:0.90px;left:504.8px;-webkit-text-stroke:0.9px #fff;">Card Payments</div><div style="position:absolute;left:3102px;top:1834px;width:251px;height:111px;background:#b034ff;border-radius:12px"></div><svg style="position:absolute;left:3142.5px;top:1863.8px;" width="50.8" height="50.4" viewBox="0 0 24 24" preserveAspectRatio="none" fill="none" stroke="#fff" stroke-width="2.0" stroke-linecap="round" stroke-linejoin="round"><path d="M3 10a7 7 0 1 0 14 0a7 7 0 1 0 -14 0"/><path d="M21 21l-6 -6"/></svg><div style="position:absolute;top:1869.1px;font-size:42.0px;line-height:42.0px;font-family:'Liberation Sans';font-weight:400;color:#fff;white-space:pre;letter-spacing:0.79px;left:3210.9px;">Filter</div><div style="position:absolute;left:3073px;top:1786px;width:317px;height:198px;border:16px solid #9b17ff;box-sizing:border-box"></div><div style="position:absolute;left:441px;top:2298px;width:2955px;height:37px;background:linear-gradient(180deg,#c9c3c3,#ebe9e9)"></div><div style="position:absolute;left:470px;top:1992px;width:483px;height:107px;background:#eceef1;border-radius:0 62px 0 62px"></div><div style="position:absolute;top:2017.9px;font-size:51.6px;line-height:51.6px;font-family:'Liberation Sans';font-weight:700;color:#4b5059;white-space:pre;letter-spacing:-4.32px;left:648.9px;">SALE</div><svg style="position:absolute;left:974px;top:2007px" width="107" height="79" viewBox="0 0 107 79"><defs><clipPath id="vc"><rect x="0" y="0" width="107" height="79" rx="6"/></clipPath></defs><g clip-path="url(#vc)"><rect width="107" height="79" fill="#ffffff"/><rect width="107" height="14" fill="#139fc8"/><rect y="65" width="107" height="14" fill="#f6a020"/></g><rect x="0.5" y="0.5" width="106" height="78" rx="6" fill="none" stroke="#e3e3e3" stroke-width="1"/><text x="54" y="54" text-anchor="middle" font-family="Liberation Sans" font-weight="700" font-style="italic" font-size="39" fill="#139bc6" stroke="#139bc6" stroke-width="1.2" letter-spacing="-1.5">VISA</text><path d="M8 26 L24 29 L18 36 Z" fill="#f3a22a"/></svg><div style="position:absolute;top:2040.2px;font-size:43.5px;line-height:43.5px;font-family:'Liberation Sans';font-weight:700;color:#111;white-space:pre;letter-spacing:6.20px;left:1099.3px;">**</div><div style="position:absolute;top:2040.8px;font-size:36.8px;line-height:36.8px;font-family:'Liberation Sans';font-weight:700;color:#111;white-space:pre;letter-spacing:3.91px;left:1139.5px;">4242</div><div style="position:absolute;left:1435px;top:1992px;width:3px;height:106px;background:#2e2e2e"></div><div style="position:absolute;left:1918px;top:1992px;width:3px;height:106px;background:#2e2e2e"></div><div style="position:absolute;left:2159px;top:1992px;width:3px;height:106px;background:#2e2e2e"></div><div style="position:absolute;left:2400px;top:1992px;width:3px;height:106px;background:#2e2e2e"></div><div style="position:absolute;top:2009.4px;font-size:32.6px;line-height:32.6px;font-family:'Liberation Sans';font-weight:400;color:#111;white-space:pre;letter-spacing:-1.67px;left:1446.7px;">Base</div><div style="position:absolute;top:2046.1px;font-size:40.6px;line-height:40.6px;font-family:'Liberation Sans';font-weight:700;color:#111;white-space:pre;letter-spacing:2.01px;left:1446.4px;">$8.00</div><div style="position:absolute;top:2009.4px;font-size:32.6px;line-height:32.6px;font-family:'Liberation Sans';font-weight:400;color:#111;white-space:pre;letter-spacing:-2.86px;left:1929.3px;">DISC</div><div style="position:absolute;top:2046.1px;font-size:40.6px;line-height:40.6px;font-family:'Liberation Sans';font-weight:700;color:#111;white-space:pre;letter-spacing:1.33px;left:1929.0px;">$0.35</div><div style="position:absolute;top:2009.4px;font-size:32.6px;line-height:32.6px;font-family:'Liberation Sans';font-weight:400;color:#111;white-space:pre;letter-spacing:-0.40px;left:2170.7px;">Tip</div><div style="position:absolute;top:2046.1px;font-size:40.6px;line-height:40.6px;font-family:'Liberation Sans';font-weight:700;color:#111;white-space:pre;letter-spacing:2.08px;left:2170.4px;">$0.80</div><div style="position:absolute;top:2009.4px;font-size:32.6px;line-height:32.6px;font-family:'Liberation Sans';font-weight:400;color:#111;white-space:pre;letter-spacing:-0.73px;left:2411.7px;">Tax</div><div style="position:absolute;top:2046.1px;font-size:40.6px;line-height:40.6px;font-family:'Liberation Sans';font-weight:700;color:#111;white-space:pre;letter-spacing:2.48px;left:2411.4px;">$0.00</div><div style="position:absolute;top:2019.1px;font-size:50.7px;line-height:50.7px;font-family:'Liberation Sans';font-weight:700;color:#5a5e66;white-space:pre;letter-spacing:2.16px;left:3100.5px;">$8.80</div><div style="position:absolute;left:448px;top:2120px;width:2939px;height:170px;background:#fde4fe"></div><div style="position:absolute;left:1891px;top:2100px;width:54px;height:54px;border-radius:50%;background:#4a4e4f"></div><svg style="position:absolute;left:1890.6px;top:2101.0px;" width="54.9" height="54.0" viewBox="0 0 24 24" preserveAspectRatio="none" fill="none" stroke="#fde4fe" stroke-width="2.0" stroke-linecap="round" stroke-linejoin="round"><path d="M6 9l6 6l6 -6"/></svg><div style="position:absolute;top:2155.1px;font-size:37.7px;line-height:37.7px;font-family:'Liberation Sans';font-weight:700;color:#111;white-space:pre;letter-spacing:-0.80px;left:477.5px;">Invoice Number :</div><div style="position:absolute;top:2155.1px;font-size:37.7px;line-height:37.7px;font-family:'Liberation Sans';font-weight:400;color:#111;white-space:pre;letter-spacing:1.18px;left:781.5px;">000001</div><div style="position:absolute;top:2211.1px;font-size:37.7px;line-height:37.7px;font-family:'Liberation Sans';font-weight:700;color:#111;white-space:pre;letter-spacing:-0.54px;left:477.5px;">External Id :</div><div style="position:absolute;top:2211.1px;font-size:37.7px;line-height:37.7px;font-family:'Liberation Sans';font-weight:400;color:#111;white-space:pre;letter-spacing:-0.10px;left:697.5px;">251211185436qikvIVbk9r</div><div style="position:absolute;top:2155.1px;font-size:37.7px;line-height:37.7px;font-family:'Liberation Sans';font-weight:700;color:#111;white-space:pre;letter-spacing:-1.38px;left:1444.1px;">Approval Code :</div><div style="position:absolute;top:2155.1px;font-size:37.7px;line-height:37.7px;font-family:'Liberation Sans';font-weight:400;color:#111;white-space:pre;letter-spacing:-1.24px;left:1723.5px;">TAS070</div><div style="position:absolute;top:2211.1px;font-size:37.7px;line-height:37.7px;font-family:'Liberation Sans';font-weight:700;color:#111;white-space:pre;letter-spacing:-0.82px;left:1444.1px;">Date(POS) :</div><div style="position:absolute;top:2211.1px;font-size:37.7px;line-height:37.7px;font-family:'Liberation Sans';font-weight:400;color:#111;white-space:pre;letter-spacing:-0.20px;left:1651.5px;">12-11-2025 - 18:55</div><div style="position:absolute;top:2155.1px;font-size:37.7px;line-height:37.7px;font-family:'Liberation Sans';font-weight:700;color:#111;white-space:pre;letter-spacing:-2.50px;left:2168.1px;">Tag 1 :</div><div style="position:absolute;top:2155.1px;font-size:37.7px;line-height:37.7px;font-family:'Liberation Sans';font-weight:400;color:#111;white-space:pre;letter-spacing:-3.71px;left:2283.5px;">NA</div><div style="position:absolute;top:2211.1px;font-size:37.7px;line-height:37.7px;font-family:'Liberation Sans';font-weight:700;color:#111;white-space:pre;letter-spacing:-1.26px;left:2168.1px;">Tag 2 :</div><div style="position:absolute;top:2211.1px;font-size:37.7px;line-height:37.7px;font-family:'Liberation Sans';font-weight:400;color:#111;white-space:pre;letter-spacing:-2.01px;left:2289.5px;">NA</div><div style="position:absolute;top:2154.1px;font-size:37.7px;line-height:37.7px;font-family:'Liberation Sans';font-weight:700;color:#111;white-space:pre;letter-spacing:-0.96px;left:2650.1px;">Tag 3 :</div><div style="position:absolute;top:2154.1px;font-size:37.7px;line-height:37.7px;font-family:'Liberation Sans';font-weight:400;color:#111;white-space:pre;letter-spacing:-3.21px;left:2773.0px;">NA</div><svg style="position:absolute;left:2646.2px;top:2204.5px;" width="45.6" height="45.0" viewBox="0 0 24 24" preserveAspectRatio="none" fill="none" stroke="#111" stroke-width="2.0" stroke-linecap="round" stroke-linejoin="round"><path d="M3 8a3 3 0 0 1 3 -3h12a3 3 0 0 1 3 3v8a3 3 0 0 1 -3 3h-12a3 3 0 0 1 -3 -3z"/><path d="M3 10l18 0"/></svg><div style="position:absolute;top:2207.7px;font-size:40.9px;line-height:40.9px;font-family:'Liberation Serif';font-weight:700;color:#111;white-space:pre;letter-spacing:-2.49px;left:2705.4px;">Name:</div><div style="position:absolute;top:2210.1px;font-size:37.7px;line-height:37.7px;font-family:'Liberation Sans';font-weight:400;color:#111;white-space:pre;letter-spacing:-0.14px;left:2831.2px;">Laura Bennet</div><svg style="position:absolute;left:3131.4px;top:2167.6px;" width="50.3" height="54.9" viewBox="0 0 24 24" preserveAspectRatio="none" fill="none" stroke="#111" stroke-width="2.0" stroke-linecap="round" stroke-linejoin="round"><path d="M10 12a2 2 0 1 0 4 0a2 2 0 0 0 -4 0"/><path d="M21 12c-2.4 4 -5.4 6 -9 6c-3.6 0 -6.6 -2 -9 -6c2.4 -4 5.4 -6 9 -6c3.6 0 6.6 2 9 6"/></svg></body></html>
